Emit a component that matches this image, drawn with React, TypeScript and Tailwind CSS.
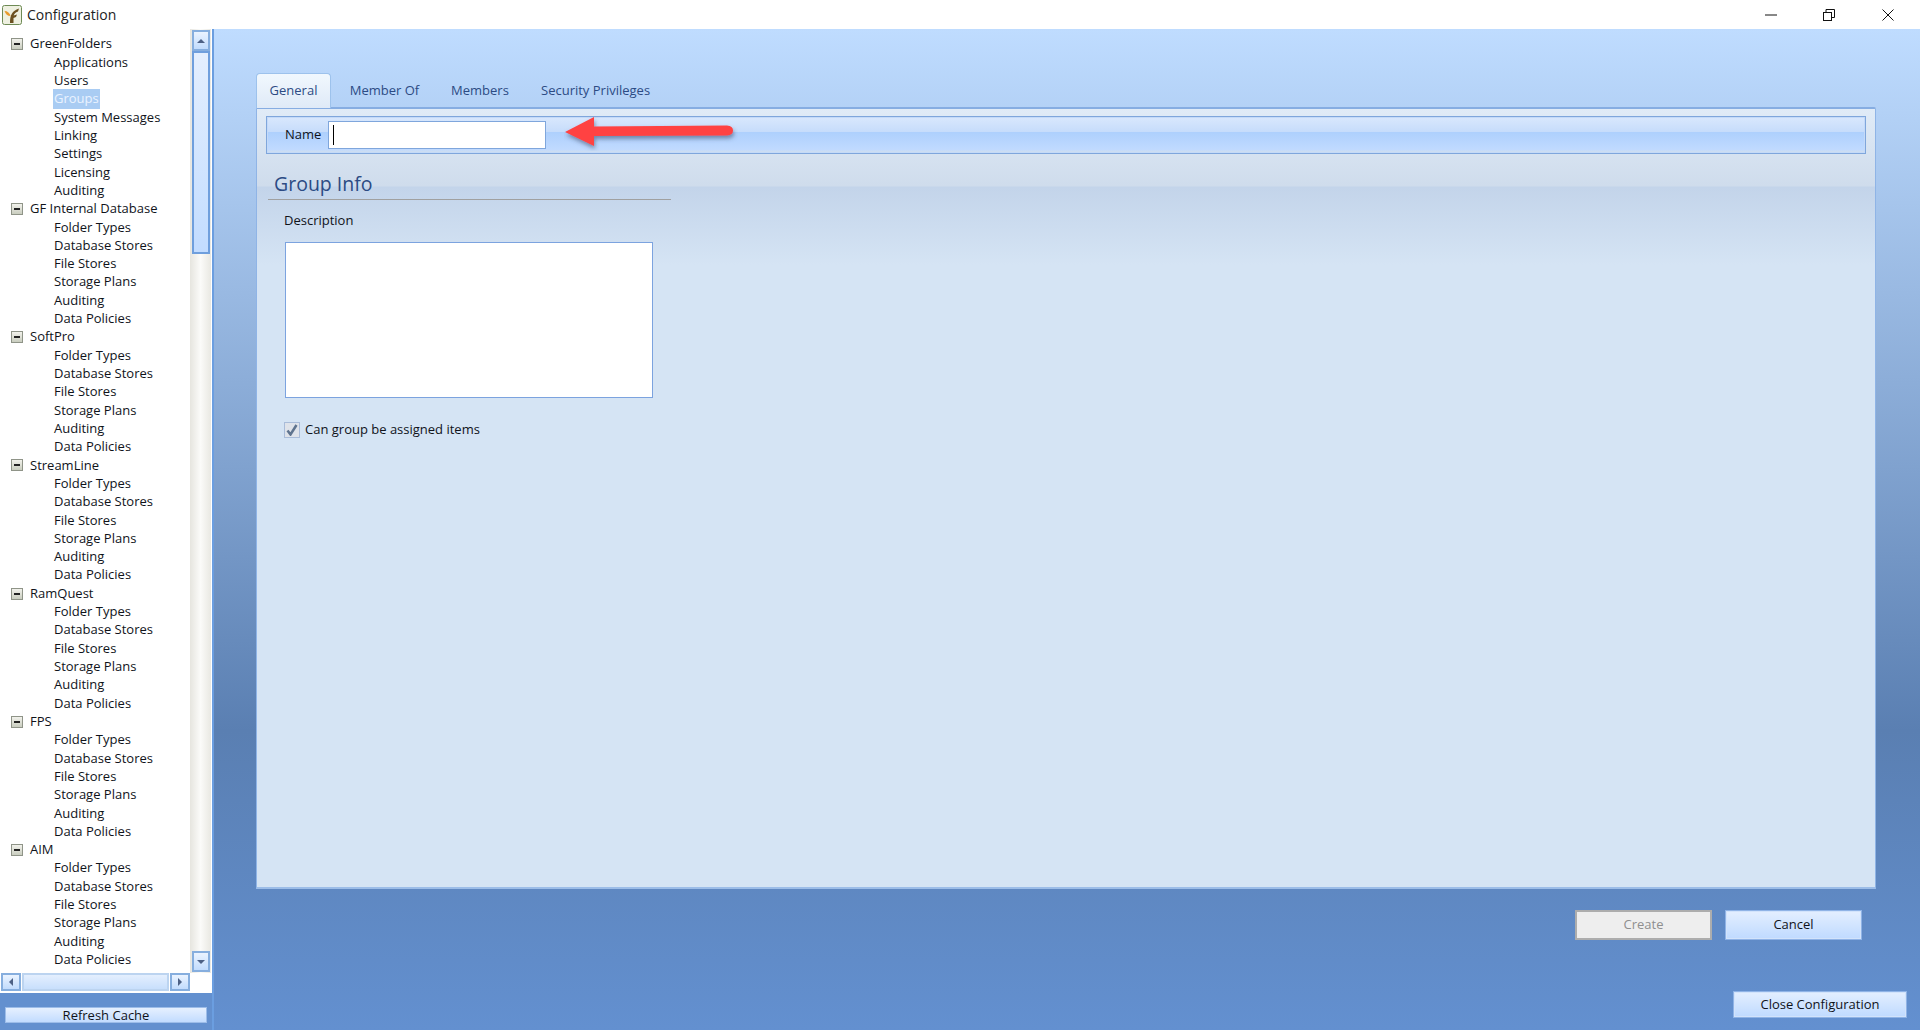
import React from "react";

const sub = ["Folder Types", "Database Stores", "File Stores", "Storage Plans", "Auditing", "Data Policies"];
const tree: [string, string[]][] = [
  ["GreenFolders", ["Applications", "Users", "Groups", "System Messages", "Linking", "Settings", "Licensing", "Auditing"]],
  ["GF Internal Database", sub],
  ["SoftPro", sub],
  ["StreamLine", sub],
  ["RamQuest", sub],
  ["FPS", sub],
  ["AIM", sub],
];

function Minus() {
  return (
    <span className="flex h-[12px] w-[12px] items-center justify-center border border-[#8f9488] bg-gradient-to-b from-[#f2f2ec] to-[#c9cdbf]">
      <span className="h-[2px] w-[6px] bg-[#222]" />
    </span>
  );
}

function Arrow({ d }: { d: string }) {
  return (
    <svg width="10" height="10" viewBox="0 0 10 10">
      <path d={d} fill="#4d6185" />
    </svg>
  );
}

function ScrollBtn({ d, className }: { d: string; className: string }) {
  return (
    <div className={`flex shrink-0 items-center justify-center border-2 border-[#86aede] bg-gradient-to-b from-[#eaf3ff] to-[#c2dcfd] ${className}`}>
      <Arrow d={d} />
    </div>
  );
}

function Tree() {
  return (
    <div className="flex-1 overflow-hidden pt-[6px]">
      {tree.map(([name, items]) => (
        <div key={name}>
          <div className="flex h-[18.32px] items-center pl-[11px]">
            <Minus />
            <span className="ml-[7px]">{name}</span>
          </div>
          {items.map((i) => (
            <div key={i} className="flex h-[18.32px] items-center pl-[54px]">
              {i === "Groups" ? (
                <span className="mx-[-1px] bg-[#a9ccf3] px-[1px] text-[#e9f3ff]">{i}</span>
              ) : (
                <span>{i}</span>
              )}
            </div>
          ))}
        </div>
      ))}
    </div>
  );
}

function Sidebar() {
  return (
    <div className="flex w-[212px] shrink-0 flex-col bg-[#6390cf]">
      <div className="flex h-[964px] flex-col bg-white">
        <div className="flex h-[944px]">
          <Tree />
          <div className="flex w-[21px] shrink-0 flex-col items-center bg-gradient-to-r from-[#e6e5df] via-[#fbfbf9] to-[#e9e8e2] py-[1px]">
            <ScrollBtn d="M1 7 L5 3 L9 7 Z" className="h-[21px] w-[18px]" />
            <div className="h-[203px] w-[18px] border-2 border-[#6f9fdd] bg-gradient-to-b from-[#e4effe] to-[#c2dcff]" />
            <div className="flex-1" />
            <ScrollBtn d="M1 3 L9 3 L5 7 Z" className="h-[21px] w-[18px]" />
          </div>
          <div className="w-[1px] shrink-0" />
        </div>
        <div className="flex h-[18px] items-stretch pl-[1px] pr-[22px]">
          <ScrollBtn d="M7 1 L7 9 L3 5 Z" className="w-[20px]" />
          <div className="mx-[1px] flex-1 border-2 border-[#bcd4f0] bg-gradient-to-b from-[#e4effe] to-[#c8dffc]" />
          <ScrollBtn d="M3 1 L7 5 L3 9 Z" className="w-[20px]" />
        </div>
      </div>
      <div className="px-[5px] pt-[13px]">
        <button className="h-[16px] w-[202px] border border-[#9dbde9] bg-gradient-to-b from-[#e6f0ff] to-[#c2dcff] text-center leading-[15px]">
          Refresh Cache
        </button>
      </div>
    </div>
  );
}

function Btn({ children, className }: { children: React.ReactNode; className: string }) {
  return (
    <button className={`flex items-center justify-center border border-[#8fb3e6] bg-gradient-to-b from-[#e4efff] to-[#bfdaff] shadow-[inset_0_0_0_1px_#d2e3fb] ${className}`}>
      {children}
    </button>
  );
}

function RedArrow() {
  return (
    <svg className="absolute left-[297px] top-[-2px]" width="174" height="36" viewBox="0 0 174 36">
      <defs>
        <filter id="s" x="-10%" y="-30%" width="120%" height="170%">
          <feDropShadow dx="1" dy="3" stdDeviation="2" floodColor="#3b4a63" floodOpacity="0.55" />
        </filter>
      </defs>
      <path
        d="M1 17 L30 2 L30 11.5 L163 10.5 Q169 11 169 15.5 Q169 20 163 20.5 L30 21 L30 31 Z"
        fill="#ff4242"
        filter="url(#s)"
      />
    </svg>
  );
}

function Panel() {
  return (
    <div className="relative -mt-px h-[782px] rounded-t-[2px] border-x border-y-2 border-x-[#8fb4e6] border-y-[#9cbde8] border-t-[#86ade2] bg-[linear-gradient(to_bottom,#e0ebf7_0px,#cfdcec_77px,#c3d4ea_78px,#d5e4f4_156px,#d5e4f4_100%)]">
      <div className="relative ml-[9px] mr-[9px] mt-[7px] flex h-[38px] items-center border border-[#7fa6dc] bg-[linear-gradient(to_bottom,#d9e8fd_0%,#c6dcfb_42%,#aed0fd_43%,#c0daff_90%,#d5dfe9_100%)] pl-[18px] shadow-[inset_0_0_0_1px_#c4daf8]">
        <span className="w-[43px]">Name</span>
        <div className="flex h-[28px] w-[218px] items-center border border-[#7fa6dc] bg-white pl-[4px]">
          <span className="h-[20px] w-[1px] bg-black" />
        </div>
        <RedArrow />
      </div>
      <div className="mx-[11px] mt-[15px] w-[403px] border-b border-[#a0a0a0] pb-[1px] pl-[6px] text-[19.5px] leading-[29px] text-[#2c4b84]">
        Group Info
      </div>
      <div className="ml-[27px] mt-[11px] leading-[18px]">Description</div>
      <div className="ml-[28px] mt-[13px] h-[156px] w-[368px] border border-[#7ca3df] bg-white" />
      <div className="ml-[27px] mt-[22px] flex items-center">
        <span className="flex h-[16px] w-[16px] items-center justify-center border border-[#a9bcd9] bg-[#dfe3ea]">
          <svg width="12" height="12" viewBox="0 0 12 12">
            <path d="M1.5 6.5 L4.5 10.5 L10.5 1" fill="none" stroke="#5f748f" strokeWidth="2.5" />
          </svg>
        </span>
        <span className="ml-[5px]">Can group be assigned items</span>
      </div>
    </div>
  );
}

function Main() {
  return (
    <div className="relative flex-1 border-l-2 border-[#6b9ee0] bg-[linear-gradient(to_bottom,#bfdcff_0px,#5a7fb2_702px,#6390d0_1001px)] pl-[42px] pr-[44px] pt-[44px]">
      <div className="flex h-[35px] items-stretch text-[#2c4b84]">
        <div className="relative z-10 flex h-[35px] w-[75px] items-center justify-center rounded-t-[4px] border border-b-0 border-[#9dc2ec] bg-gradient-to-b from-[#f1f8fe] to-[#dfeaf7]">
          General
        </div>
        <div className="flex w-[107px] items-center justify-center">Member Of</div>
        <div className="ml-[9px] flex w-[66px] items-center justify-center">Members</div>
        <div className="ml-[28px] flex items-center">Security Privileges</div>
      </div>
      <Panel />
      <div className="mt-[21px] flex justify-end gap-[13px] pr-[14px]">
        <button className="flex h-[30px] w-[137px] items-center justify-center border-2 border-[#adadad] bg-[#eeeeee] text-[#8f8f8f]">
          Create
        </button>
        <Btn className="h-[30px] w-[137px]">Cancel</Btn>
      </div>
      <div className="mr-[-31px] mt-[51px] flex justify-end">
        <Btn className="h-[27px] w-[174px]">Close Configuration</Btn>
      </div>
    </div>
  );
}

export default function App() {
  return (
    <div
      className="flex h-[1030px] w-[1920px] flex-col overflow-hidden bg-white text-[13px] text-[#10131a]"
      style={{ fontFamily: '"Open Sans", "Noto Sans", sans-serif' }}
    >
      <div className="flex h-[29px] shrink-0 items-center bg-white">
        <svg className="ml-[2px]" width="20" height="20" viewBox="0 0 20 20">
          <rect x="0.5" y="0.5" width="19" height="19" rx="2" fill="#eef0e0" stroke="#6e8a55" />
          <path d="M8 18 C8 10 10 6 17 3.5 L16 6.5 C13.5 7.5 12 9 11.7 10.5 L15 9.5 L14 12 L11.5 13 L11.5 18 Z" fill="#6b5020" />
          <path d="M2.5 6 C5.5 6 8 8 8.5 11 C5.5 11 3.5 9 2.5 6 Z" fill="#e89a2c" />
        </svg>
        <span className="ml-[5px] text-[14px] text-[#222]">Configuration</span>
        <div className="flex-1" />
        <svg className="mr-[46px]" width="12" height="4" viewBox="0 0 12 4">
          <path d="M0 2 H12" stroke="#111" strokeWidth="1" />
        </svg>
        <svg className="mr-[47px]" width="12" height="12" viewBox="0 0 12 12">
          <rect x="0.5" y="3.5" width="8" height="8" fill="none" stroke="#111" />
          <path d="M3 3.5 V0.5 H11.5 V8.5 H8.5" fill="none" stroke="#111" />
        </svg>
        <svg className="mr-[26px]" width="12" height="12" viewBox="0 0 12 12">
          <path d="M0.5 0.5 L11.5 11.5 M11.5 0.5 L0.5 11.5" stroke="#111" strokeWidth="1" />
        </svg>
      </div>
      <div className="flex flex-1">
        <Sidebar />
        <Main />
      </div>
    </div>
  );
}
